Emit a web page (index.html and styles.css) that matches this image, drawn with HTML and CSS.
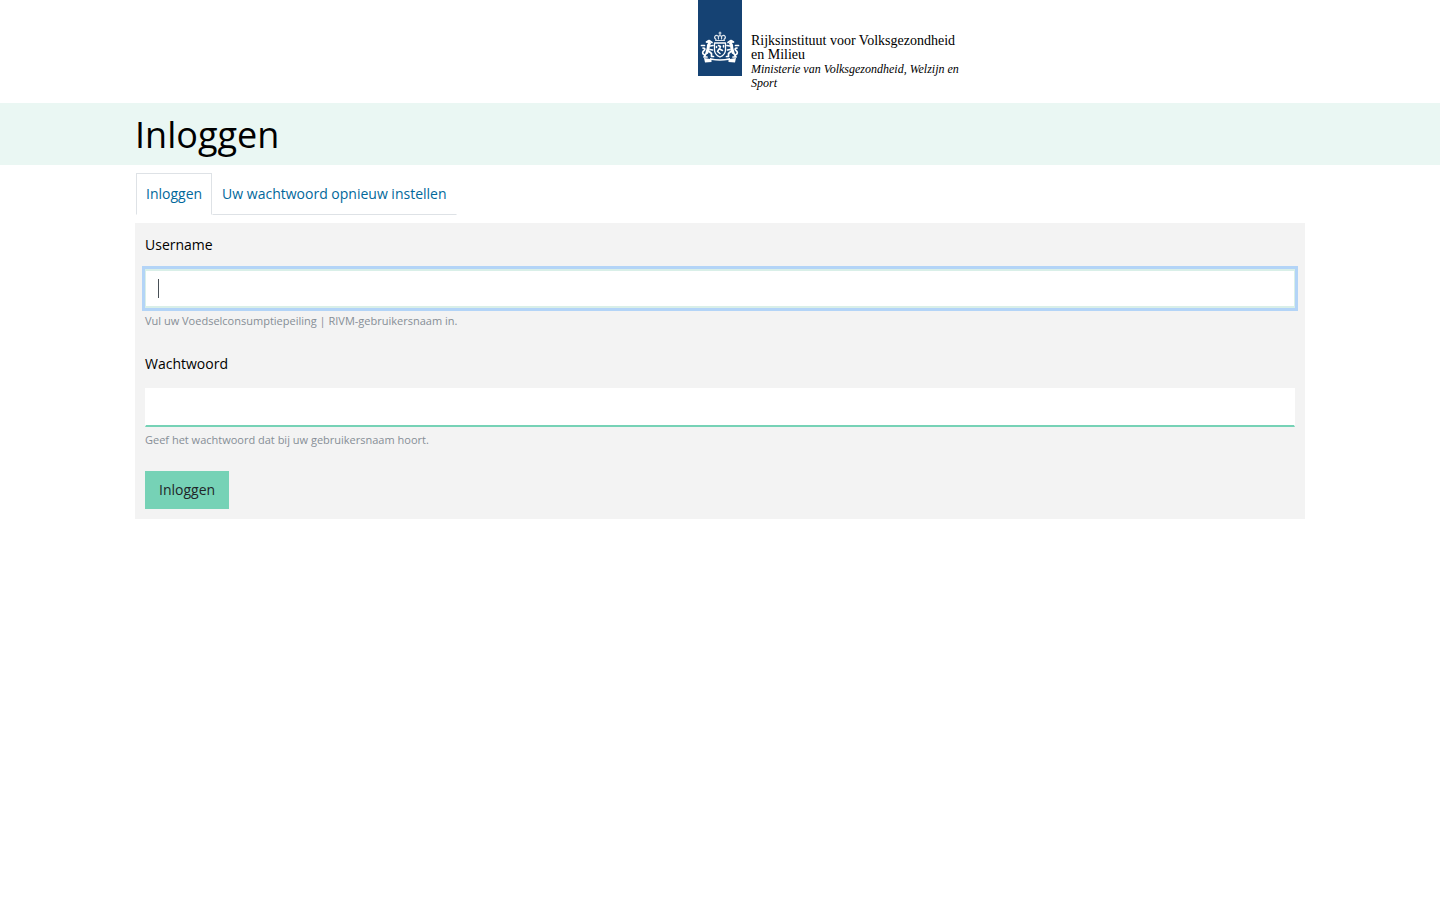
FILE: index.html
```html
<!DOCTYPE html>
<html lang="nl">
<head>
<meta charset="utf-8">
<meta name="viewport" content="width=device-width, initial-scale=1">
<title>Inloggen</title>
<link rel="stylesheet" href="styles.css">
</head>
<body>
<header class="site-header">
  <div class="brand">
    <svg class="brand-mark" width="44" height="76" viewBox="0 0 44 76" aria-hidden="true">
      <rect width="44" height="76" fill="#154273"/>
      <g fill="none" stroke="#fff" stroke-linecap="round" stroke-linejoin="round">
        <path stroke-width="1.200" stroke-opacity=".85" d="M22 32v3M21 33h2M18 39.500c-3-2.500-.5-5 2-3.500M26 39.500c3-2.500.5-5-2-3.500M20.500 39c-.5-2 .5-3.500 1.500-3.500s2 1.500 1.500 3.500M17.500 40.500h9"/>
        <g id="lion">
          <path stroke-width="3" d="M10.500 42l1 1.500M10.500 45c0 3-.5 5-1.500 7.500"/>
          <path stroke-width="1.700" d="M8.500 42l2.500-1.500 3 2M12 46l3-.5M12 49.500l2.500.5M10.500 51l3 2.500v3h2M8.500 53l-2.500 4h3M6 54.500c-2-1-1.500-3 0-4s1-2.500-1-2.500M3.500 45.500h3"/>
        </g>
        <use href="#lion" transform="matrix(-1 0 0 1 44 0)"/>
        <path stroke-width="1.300" d="M16.500 43h11v7c0 3-2 5.500-5.500 7-3.500-1.500-5.500-4-5.500-7z"/>
        <path stroke-width="1.500" d="M20.500 45.500l2 1-1 2.500 3 1.500M21 49l-1.500 2.500 2.500 2M18.500 46.500v1M25.500 45.500v1.500"/>
      </g>
      <path fill="#fff" d="M6 58l6 1v-1q10 2.500 20 0v1l6-1-1 4.500-6.500-.5v-2q-8.500 1.500-17 0v2l-6.500.5z"/>
    </svg>
    <div class="brand-text">
      <div class="brand-name">Rijksinstituut voor Volksgezondheid en Milieu</div>
      <div class="brand-ministry">Ministerie van Volksgezondheid, Welzijn en Sport</div>
    </div>
  </div>
</header>
<div class="title-band">
  <div class="container"><h1 class="page-title">Inloggen</h1></div>
</div>
<main class="container">
  <nav class="tabs" aria-label="Tabs">
    <a class="tab tab-active" href="#login" aria-current="page">Inloggen</a>
    <a class="tab" href="#password">Uw wachtwoord opnieuw instellen</a>
  </nav>
  <form class="login-form" id="login">
    <div class="form-item">
      <label class="form-label" for="name">Username</label>
      <input class="form-control" type="text" id="name" placeholder=" " aria-describedby="name-help" autofocus>
      <small class="form-help" id="name-help">Vul uw Voedselconsumptiepeiling | RIVM-gebruikersnaam in.</small>
    </div>
    <div class="form-item">
      <label class="form-label" for="pass">Wachtwoord</label>
      <input class="form-control" type="password" id="pass" placeholder=" " aria-describedby="pass-help">
      <small class="form-help" id="pass-help">Geef het wachtwoord dat bij uw gebruikersnaam hoort.</small>
    </div>
    <button class="button" type="submit">Inloggen</button>
  </form>
</main>
</body>
</html>
```
FILE: styles.css
```css
* { box-sizing: border-box; }
body {
  margin: 0;
  background: #fff;
  color: #000;
  font: 14px/24px "Open Sans", "Noto Sans", sans-serif;
}
.container {
  max-width: 1170px;
  margin: 0 auto;
}
.brand {
  display: flex;
  align-items: flex-start;
  gap: 9px;
  padding: 0 0 13px calc(50% - 22px);
}
.brand-mark { flex: none; display: block; }
.brand-text {
  max-width: 214px;
  padding-top: 34px;
  font-family: "Liberation Serif", serif;
  font-size: 14px;
  line-height: 14px;
}
.brand-ministry { font-size: 12px; font-style: italic; }
.title-band { background: #eaf7f3; }
.page-title {
  margin: 0;
  padding: 8px 0 6px;
  font-size: 36px;
  line-height: 48px;
  font-weight: 400;
}
.tabs {
  display: flex;
  margin: 8px 1px;
}
.tab {
  padding: 8px 9px;
  border: 1px solid transparent;
  border-bottom-color: #dee2e6;
  color: #01689b;
  text-decoration: none;
}
.tab-active {
  border-color: #dee2e6;
  border-bottom-color: #fff;
}
.login-form {
  padding: 10px;
  background: #f3f3f3;
}
.form-item { margin-bottom: 22px; }
.form-label {
  display: block;
  margin-bottom: 12px;
}
.form-control {
  display: block;
  width: 100%;
  height: 39px;
  padding: 6px 12px;
  border: 1px solid transparent;
  border-width: 2px 1px;
  border-bottom-color: #76d2b6;
  border-radius: 0;
  background: #fff;
  color: #495057;
  font: inherit;
}
.form-control:focus {
  outline: none;
  border-color: #d9efe8;
  box-shadow: 0 0 0 3px #b3d4f7;
}
/* steady insertion mark while the field is empty */
.form-control:focus:placeholder-shown {
  caret-color: transparent;
  background: #fff linear-gradient(#495057, #495057) 12px center / 1px 19px no-repeat;
}
.form-help {
  display: block;
  margin-top: 4px;
  color: #868e96;
  font-size: 11px;
  line-height: 18px;
}
.button {
  display: block;
  padding: 7px 14px;
  border: 0;
  background: #76d2b6;
  color: #212529;
  font: inherit;
}
```
